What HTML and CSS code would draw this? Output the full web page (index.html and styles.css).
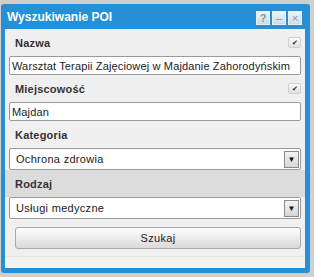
FILE: index.html
```html
<!DOCTYPE html>
<html lang="pl">
<head>
  <meta charset="UTF-8" />
  <title>Wyszukiwanie POI</title>
  <link rel="stylesheet" href="styles.css">
</head>
<body>

  <div class="window">
    <div class="titlebar">
      <span class="title">Wyszukiwanie POI</span>
      <div class="tools">
        <span class="tool tool-help">?</span>
        <span class="tool">&ndash;</span>
        <span class="tool">&times;</span>
      </div>
    </div>

    <div class="panel">
      <div class="field">
        <div class="field-head">
          <label>Nazwa</label>
          <span class="check">&#10004;</span>
        </div>
        <input class="text" type="text" value="Warsztat Terapii Zajęciowej w Majdanie Zahorodyńskim">
      </div>

      <div class="field">
        <div class="field-head">
          <label>Miejscowość</label>
          <span class="check">&#10004;</span>
        </div>
        <input class="text" type="text" value="Majdan">
      </div>

      <div class="field">
        <div class="field-head">
          <label>Kategoria</label>
        </div>
        <div class="select">
          <span>Ochrona zdrowia</span>
          <span class="arrow">&#9660;</span>
        </div>
      </div>

      <div class="field">
        <div class="field-head active">
          <label>Rodzaj</label>
        </div>
        <div class="select">
          <span>Usługi medyczne</span>
          <span class="arrow">&#9660;</span>
        </div>
      </div>

      <button class="search">Szukaj</button>

      <div class="panel-foot"></div>
    </div>
  </div>

</body>
</html>
```

FILE: styles.css
```css
* {
  box-sizing: border-box;
}

body {
  margin: 0;
  background-color: #cfcfcf;
  font-family: "Liberation Sans", Arial, sans-serif;
  font-size: 11px;
  color: #222;
}

.window {
  margin: 4px 0 0 1px;
  width: 309px;
  height: 269px;
  background-color: #2590d4;
  border-radius: 3px;
  padding: 0 5px 5px 4px;
  display: flex;
  flex-direction: column;
}

.titlebar {
  height: 25px;
  display: flex;
  align-items: center;
  justify-content: space-between;
  padding: 0 3px 0 2px;
}

.title {
  color: white;
  font-weight: bold;
  font-size: 12px;
}

.tools {
  display: flex;
  gap: 2px;
  margin-top: 2px;
}

.tool {
  width: 14px;
  height: 14px;
  background: linear-gradient(#eef4f8, #cddde8);
  border: 1px solid #e6eef4;
  color: #8797a3;
  font-size: 11px;
  line-height: 12px;
  text-align: center;
}

.tool-help {
  font-weight: bold;
}

.panel {
  flex: 1;
  background-color: #f0f0f0;
  display: flex;
  flex-direction: column;
}

.field-head {
  height: 27px;
  display: flex;
  align-items: center;
  justify-content: space-between;
  padding: 0 4px 0 10px;
}

.field-head.active {
  background-color: #dcdcdc;
}

.field-head label {
  font-weight: bold;
  color: #333;
  letter-spacing: 0.2px;
}

.check {
  width: 13px;
  height: 11px;
  background: linear-gradient(#fbfbfb, #dfdfdf);
  border: 1px solid #cfcfcf;
  border-radius: 2px;
  font-size: 7px;
  line-height: 9px;
  text-align: center;
  color: #222;
}

.text {
  display: block;
  margin: 0 4px;
  width: 292px;
  height: 19px;
  border: 1px solid #9a9a9a;
  border-radius: 2px;
  padding: 0 2px;
  font-family: "Liberation Sans", Arial, sans-serif;
  font-size: 11px;
  letter-spacing: 0.15px;
  color: #222;
  background: white;
}

.select {
  margin: 0 4px;
  height: 22px;
  border: 1px solid #9a9a9a;
  border-radius: 2px;
  background: white;
  display: flex;
  align-items: center;
  justify-content: space-between;
  padding: 0 1px 0 6px;
  letter-spacing: 0.3px;
}

.arrow {
  width: 15px;
  height: 17px;
  background: linear-gradient(#f4f4f4, #d6d6d6);
  border: 1px solid #8a8a8a;
  font-size: 8px;
  line-height: 16px;
  text-align: center;
  color: #111;
  letter-spacing: 0;
}

.search {
  margin: 8px 4px 0 10px;
  height: 22px;
  border: 1px solid #a8a8a8;
  border-radius: 3px;
  background: linear-gradient(#fdfdfd, #dadada);
  font-family: "Liberation Sans", Arial, sans-serif;
  font-size: 11px;
  letter-spacing: 0.3px;
  color: #222;
}

.panel-foot {
  margin-top: 7px;
  flex: 1;
  border-top: 1px solid #ece8d8;
  background-color: #f3f3f3;
}
```
